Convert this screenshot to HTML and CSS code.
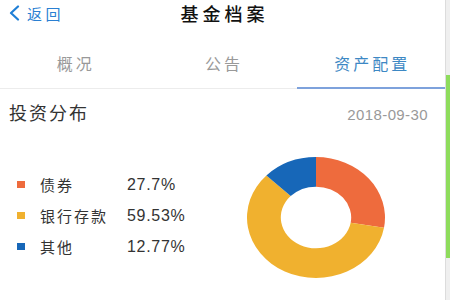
FILE: index.html
```html
<!DOCTYPE html>
<html lang="zh-CN">
<head>
	<meta charset="UTF-8">
	<title>基金档案</title>
	<link rel="stylesheet" href="styles.css">
</head>
<body>
<div class="page">
	<div class="main">
		<!-- 顶部 -->
		<header class="topbar">
			<a href="#" class="back">
				<svg class="back-icon" width="12" height="16" viewBox="0 0 12 16">
					<path d="M10 1.5 L3 8 L10 14.5" fill="none" stroke="#1f7fd6" stroke-width="2.2" stroke-linecap="round" stroke-linejoin="round"/>
				</svg>
				<span>返回</span>
			</a>
			<h1 class="title">基金档案</h1>
			<span></span>
		</header>
		<!-- 标签 -->
		<nav class="tabs">
			<a href="#" class="tab">概况</a>
			<a href="#" class="tab">公告</a>
			<a href="#" class="tab active">资产配置</a>
		</nav>
		<!-- 投资分布 -->
		<section class="dist">
			<div class="dist-head">
				<h2>投资分布</h2>
				<span class="date">2018-09-30</span>
			</div>
			<div class="dist-body">
				<ul class="legend">
					<li><i class="dot orange"></i><span class="name">债券</span><span class="val">27.7%</span></li>
					<li><i class="dot yellow"></i><span class="name">银行存款</span><span class="val">59.53%</span></li>
					<li><i class="dot blue"></i><span class="name">其他</span><span class="val">12.77%</span></li>
				</ul>
				<svg class="donut" width="138" height="121" viewBox="0 0 100 100" preserveAspectRatio="none">
					<path d="M50 0 A50 50 0 0 1 99.28 58.44 L75.13 54.31 A25.5 25.5 0 0 0 50 24.5 Z" fill="#ee6b3d"/>
					<path d="M99.28 58.44 A50 50 0 1 1 14.05 15.24 L31.66 32.27 A25.5 25.5 0 1 0 75.13 54.31 Z" fill="#f0b12f"/>
					<path d="M14.05 15.24 A50 50 0 0 1 50 0 L50 24.5 A25.5 25.5 0 0 0 31.66 32.27 Z" fill="#1767b8"/>
				</svg>
			</div>
		</section>
	</div>
	<!-- 右侧边条 -->
	<div class="side">
		<div class="side-green"></div>
	</div>
</div>
</body>
</html>
```

FILE: styles.css
```css
body,
h1,
h2,
ul {
	margin: 0;
	padding: 0;
}

ul {
	list-style: none;
}

a {
	text-decoration: none;
}

body {
	background: #fff;
	font-family: "Noto Sans CJK SC", "Liberation Sans", sans-serif;
	color: #333;
}

.page {
	display: flex;
	width: 450px;
	height: 300px;
	overflow: hidden;
}

.main {
	flex: 1;
}

/* 顶部 */
.topbar {
	display: grid;
	grid-template-columns: 1fr auto 1fr;
	align-items: center;
	height: 26px;
}

.back {
	display: flex;
	align-items: center;
	padding-left: 8px;
	color: #2a7fd2;
	font-size: 15px;
	letter-spacing: 3.5px;
}

.back-icon {
	margin-right: 7px;
}

.title {
	font-size: 18px;
	font-weight: 500;
	letter-spacing: 4px;
	padding-left: 4px;
	color: #111;
}

/* 标签 */
.tabs {
	display: flex;
	border-bottom: 1px solid #ececec;
}

.tab {
	flex: 1;
	padding: 27px 0 14px 3px;
	font-size: 16px;
	line-height: 21px;
	letter-spacing: 3px;
	text-align: center;
	color: #999;
}

.tab.active {
	color: #3d88c4;
	border-bottom: 2px solid #7ea2dc;
	margin-bottom: -1px;
	padding-bottom: 13px;
}

/* 投资分布 */
.dist-head {
	display: flex;
	justify-content: space-between;
	align-items: baseline;
	padding: 11px 17px 0 9px;
}

.dist-head h2 {
	font-size: 18px;
	font-weight: normal;
	letter-spacing: 2px;
	line-height: 24px;
	color: #333;
}

.date {
	font-family: "Liberation Sans", sans-serif;
	font-size: 15px;
	letter-spacing: .4px;
	color: #999;
}

.dist-body {
	display: flex;
	padding-top: 33px;
}

.legend {
	width: 247px;
	padding-top: 12px;
}

.legend li {
	display: grid;
	grid-template-columns: 8px 72px auto;
	column-gap: 15px;
	align-items: center;
	height: 31px;
	padding-left: 17px;
}

.dot {
	width: 8px;
	height: 7px;
}

.orange {
	background: #ee6b3d;
}

.yellow {
	background: #f0b12f;
}

.blue {
	background: #1767b8;
}

.name {
	font-size: 15px;
	letter-spacing: 2px;
}

.val {
	font-family: "Liberation Sans", sans-serif;
	font-size: 16px;
	letter-spacing: .7px;
}

/* 右侧边条 */
.side {
	width: 4px;
	border-left: 1px solid #dcdcdc;
	background: #efefef;
}

.side-green {
	margin-top: 75px;
	height: 183px;
	background: #8edc5c;
}
```
